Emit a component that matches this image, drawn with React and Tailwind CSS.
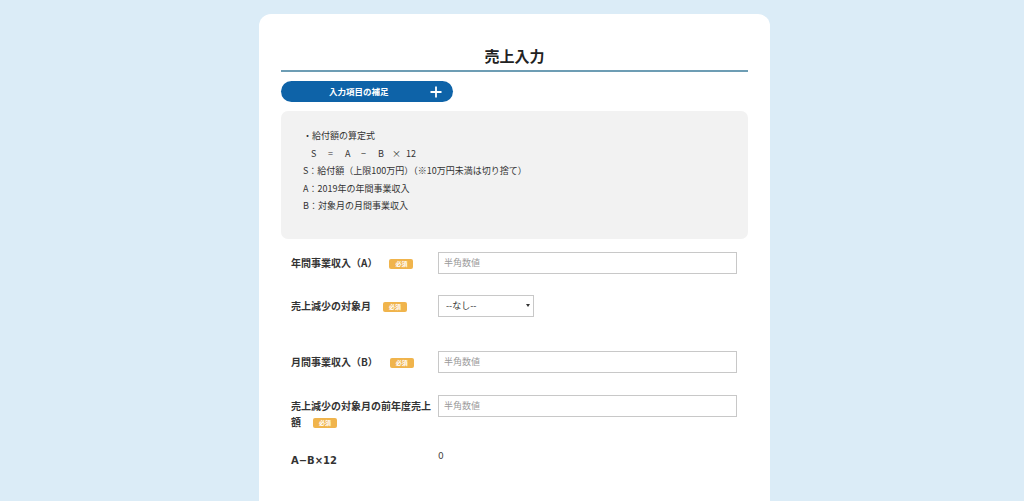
import { useState } from 'react';

const JP = { fontFamily: '"Noto Sans CJK JP", "Noto Sans", sans-serif' };
const LATIN = { fontFamily: '"DejaVu Sans", "Noto Sans CJK JP", sans-serif' };

function Required() {
  return (
    <span className="inline-flex items-center justify-center w-[24px] h-[10px] rounded-[2px] bg-[#f0b44c] text-white text-[6px] font-bold leading-none align-middle ml-[12px]">
      必須
    </span>
  );
}

function TextInput({ placeholder = '半角数値' }) {
  return (
    <input
      type="text"
      placeholder={placeholder}
      className="block w-[299px] h-[22px] border border-[#c8c8c8] bg-white px-[5px] text-[9px] text-[#333] placeholder:text-[#9a9a9a] outline-none"
      style={JP}
    />
  );
}

function Row({ label, children, className = '' }) {
  return (
    <div className={'flex items-start ' + className}>
      <div className="w-[157px] shrink-0 pl-[10px] pr-[2px] pt-[3px] text-[10px] leading-[16px] font-bold text-[#333]">
        {label}
      </div>
      {children}
    </div>
  );
}

export default function App() {
  const [month, setMonth] = useState('');

  return (
    <div className="min-h-screen bg-[#dbecf7] pt-[14px]" style={JP}>
      <div className="ml-[259px] w-[511px] bg-white rounded-[12px] px-[22px] pt-[31px] pb-[80px]">
        {/* Title */}
        <h1 className="text-center text-[15px] font-bold text-[#222] leading-[22px] pb-[3px] border-b-2 border-[#6d9db4]">
          売上入力
        </h1>

        {/* Accordion toggle */}
        <button className="mt-[9px] w-[172px] h-[21px] rounded-full bg-[#0e63a8] flex items-center justify-between text-white pl-[48px] pr-[11px]">
          <span className="text-[8.5px] font-bold leading-none">入力項目の補足</span>
          <svg width="12" height="12" viewBox="0 0 12 12">
            <path d="M6 0.5v11M0.5 6h11" stroke="white" strokeWidth="1.8" />
          </svg>
        </button>

        {/* Info box */}
        <div className="mt-[9px] bg-[#f2f2f2] rounded-[7px] pl-[22px] pt-[16px] pb-[24px] text-[9px] leading-[17.5px] text-[#333]">
          <p>・給付額の算定式</p>
          <p className="pl-[8px] flex">
            <span className="w-[17px]">S</span>
            <span className="w-[17px]">=</span>
            <span className="w-[16px]">A</span>
            <span className="w-[17px]">−</span>
            <span className="w-[14px]">B</span>
            <span className="w-[14px]">×</span>
            <span>12</span>
          </p>
          <p>S：給付額（上限100万円）（※10万円未満は切り捨て）</p>
          <p>A：2019年の年間事業収入</p>
          <p>B：対象月の月間事業収入</p>
        </div>

        {/* Form */}
        <Row className="mt-[13px]" label={<>年間事業収入（A）<Required /></>}>
          <TextInput />
        </Row>

        <Row className="mt-[21px]" label={<>売上減少の対象月<Required /></>}>
          <div className="relative w-[96px] h-[22px]">
            <select
              value={month}
              onChange={(e) => setMonth(e.target.value)}
              className="block appearance-none w-full h-full border border-[#c8c8c8] bg-white pl-[7px] text-[9px] text-[#333] outline-none"
              style={JP}
            >
              <option value="">--なし--</option>
              <option value="1">1月</option>
              <option value="2">2月</option>
              <option value="3">3月</option>
            </select>
            <span className="pointer-events-none absolute right-[4px] top-[9.5px] w-0 h-0 border-l-[2.5px] border-r-[2.5px] border-t-[3.5px] border-l-transparent border-r-transparent border-t-[#333]" />
          </div>
        </Row>

        <Row className="mt-[34px]" label={<>月間事業収入（B）<Required /></>}>
          <TextInput />
        </Row>

        <Row className="mt-[22px]" label={<>売上減少の対象月の前年度売上額<Required /></>}>
          <TextInput />
        </Row>

        <div className="flex items-start mt-[18px]">
          <div className="w-[157px] shrink-0 pl-[10px] pt-[5px] text-[10px] leading-[15px] font-bold text-[#333]" style={LATIN}>
            A−B×12
          </div>
          <div className="pt-[2px] text-[9px] leading-[13.5px] text-[#444]" style={LATIN}>0</div>
        </div>
      </div>
    </div>
  );
}
